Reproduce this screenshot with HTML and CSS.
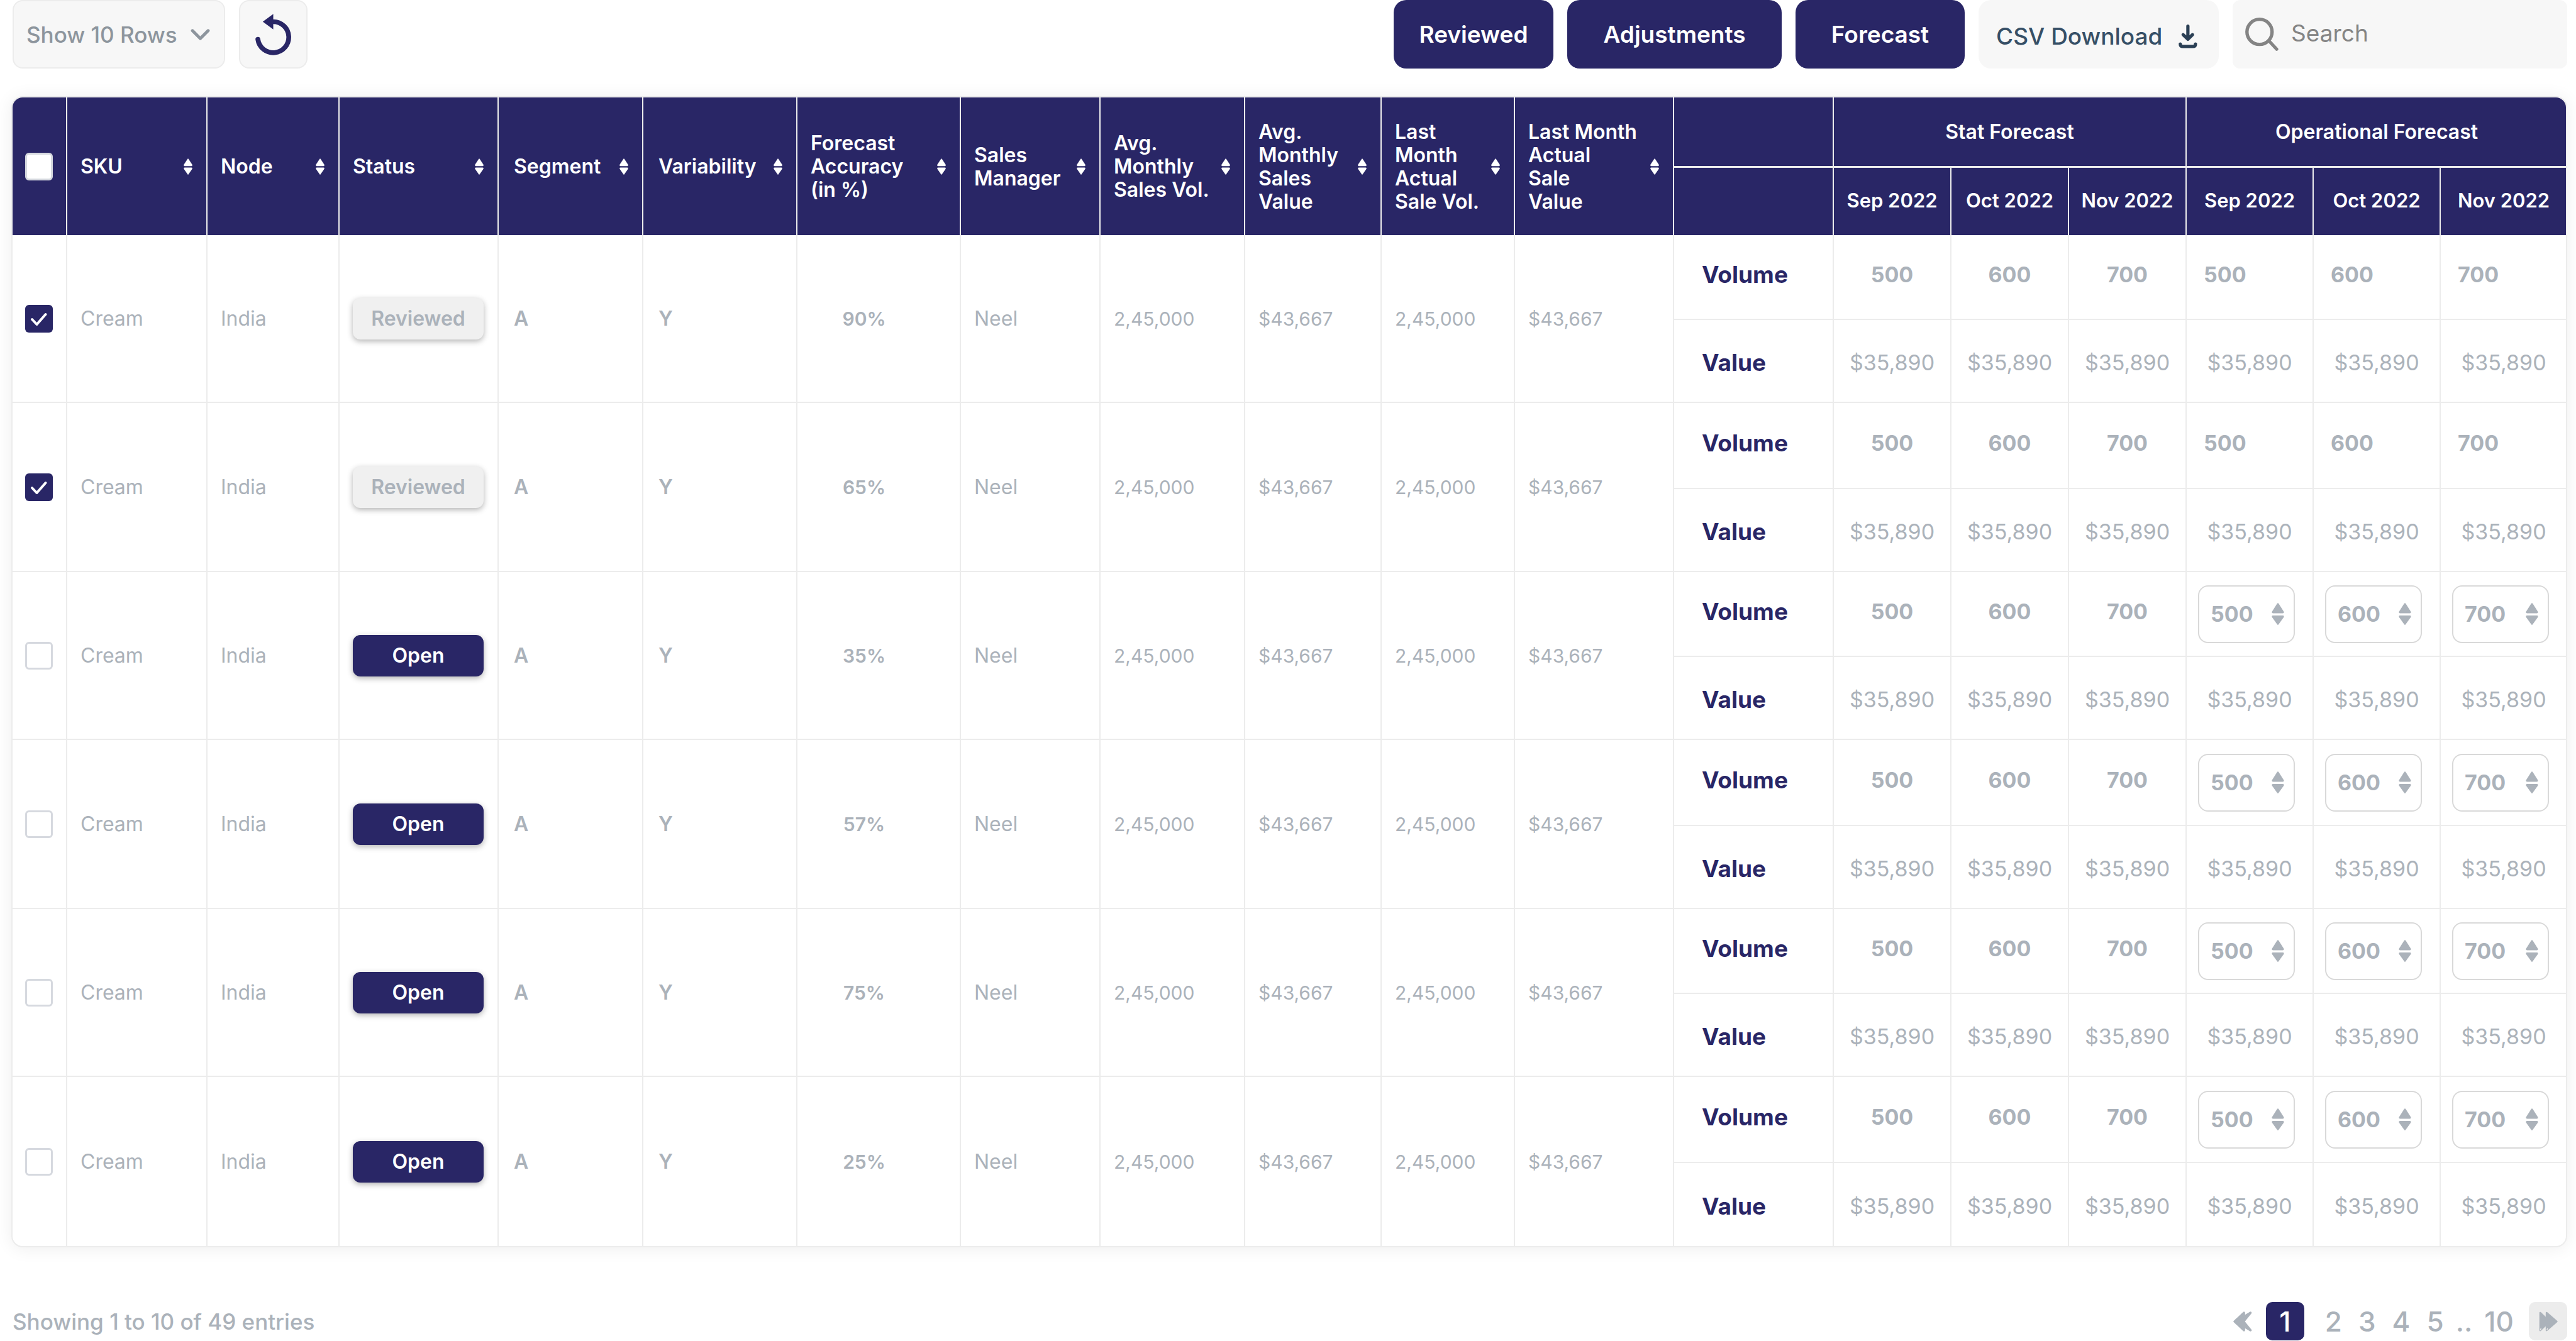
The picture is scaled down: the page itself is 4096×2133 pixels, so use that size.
FILE: index.html
```html
<!DOCTYPE html>
<html lang="en">
<head>
<meta charset="utf-8">
<meta name="viewport" content="width=device-width, initial-scale=1">
<title>Forecast Review</title>
<link rel="stylesheet" href="styles.css">
</head>
<body>
<svg class="symbols" aria-hidden="true">
  <symbol id="sort" viewBox="0 0 20 37"><path d="M9 1Q10-.6 11 1L19.4 14Q20.4 17.3 17.5 17.3H2.500Q-.4 17.3.6 14ZM9 36Q10 37.600 11 36L19.400 24Q20.400 20.800 17.500 20.800H2.500Q-.4 20.800.6 24Z" fill="currentColor"/></symbol>
  <symbol id="step" viewBox="0 0 28 50"><path d="M12.500 1.200Q14-.8 15.500 1.200L27.500 20Q28.500 23.500 25 23.500H3Q-.5 23.500.5 20ZM12.500 48.800Q14 50.800 15.500 48.800L27.500 32Q28.500 28.500 25 28.500H3Q-.5 28.500.5 32Z" fill="currentColor"/></symbol>
</svg>

<main class="page">
  <header class="toolbar">
    <label class="rows-select">
      <select aria-label="Rows to show"><option>Show 10 Rows</option><option>Show 25 Rows</option></select>
      <svg class="icon-chevron" viewBox="0 0 44 26" aria-hidden="true"><path d="M4 4 22 22 40 4" fill="none" stroke="currentColor" stroke-width="7" stroke-linecap="round" stroke-linejoin="round"/></svg>
    </label>
    <button class="reset" type="button" aria-label="Reset">
      <svg viewBox="480 93 246 282" aria-hidden="true"><path d="M598 145.500H603A106.500 106.500 0 1 1 497.500 267" fill="none" stroke="currentColor" stroke-width="33" stroke-linecap="round"/><path d="M531 146 603 93V198Z" fill="currentColor"/></svg>
    </button>
    <nav class="actions">
      <button class="btn" type="button">Reviewed</button>
      <button class="btn btn-wide" type="button">Adjustments</button>
      <button class="btn btn-mid" type="button">Forecast</button>
      <button class="btn-csv" type="button">CSV Download
        <svg viewBox="153 138 126 162" aria-hidden="true"><g fill="none" stroke="currentColor" stroke-width="22" stroke-linecap="round" stroke-linejoin="round"><path d="M215.500 149V236M183 207 215.500 238 247 207"/><path d="M164 270Q164 287 181 287H250Q267 287 267 270"/></g></svg>
      </button>
      <label class="search">
        <svg viewBox="612 90 227 228" aria-hidden="true"><circle cx="709.500" cy="187.500" r="86" fill="none" stroke="currentColor" stroke-width="23"/><path d="M773 248 827 306" stroke="currentColor" stroke-width="22" stroke-linecap="round"/></svg>
        <input type="text" placeholder="Search" aria-label="Search">
      </label>
    </nav>
  </header>

  <section class="card">
    <table class="grid">
      <colgroup>
        <col class="w-check"><col class="w-sku"><col class="w-node"><col class="w-status"><col class="w-segment"><col class="w-variability"><col class="w-accuracy"><col class="w-manager"><col class="w-avgvol"><col class="w-avgval"><col class="w-lastvol"><col class="w-lastval"><col class="w-measure"><col class="w-stat"><col class="w-stat"><col class="w-stat"><col class="w-oper"><col class="w-oper"><col class="w-last">
      </colgroup>
      <thead>
        <tr class="head-top">
          <th rowspan="2" class="check"><input type="checkbox" aria-label="Select all"></th>
          <th rowspan="2"><div class="head">SKU<button type="button" aria-label="Sort by SKU"><svg><use href="#sort"/></svg></button></div></th>
          <th rowspan="2"><div class="head">Node<button type="button" aria-label="Sort by node"><svg><use href="#sort"/></svg></button></div></th>
          <th rowspan="2"><div class="head">Status<button type="button" aria-label="Sort by status"><svg><use href="#sort"/></svg></button></div></th>
          <th rowspan="2" class="inset"><div class="head">Segment<button type="button" aria-label="Sort by segment"><svg><use href="#sort"/></svg></button></div></th>
          <th rowspan="2" class="inset"><div class="head">Variability<button type="button" aria-label="Sort by variability"><svg><use href="#sort"/></svg></button></div></th>
          <th rowspan="2"><div class="head"><span>Forecast<br>Accuracy<br>(in %)</span><button type="button" aria-label="Sort by forecast accuracy"><svg><use href="#sort"/></svg></button></div></th>
          <th rowspan="2"><div class="head"><span>Sales<br>Manager</span><button type="button" aria-label="Sort by sales manager"><svg><use href="#sort"/></svg></button></div></th>
          <th rowspan="2"><div class="head"><span>Avg.<br>Monthly<br>Sales Vol.</span><button type="button" aria-label="Sort by average volume"><svg><use href="#sort"/></svg></button></div></th>
          <th rowspan="2"><div class="head"><span>Avg.<br>Monthly<br>Sales<br>Value</span><button type="button" aria-label="Sort by average value"><svg><use href="#sort"/></svg></button></div></th>
          <th rowspan="2"><div class="head"><span>Last<br>Month<br>Actual<br>Sale Vol.</span><button type="button" aria-label="Sort by last month volume"><svg><use href="#sort"/></svg></button></div></th>
          <th rowspan="2"><div class="head"><span>Last Month<br>Actual<br>Sale<br>Value</span><button type="button" aria-label="Sort by last month value"><svg><use href="#sort"/></svg></button></div></th>
          <td class="split"></td>
          <th colspan="3" class="split">Stat Forecast</th>
          <th colspan="3" class="split end">Operational Forecast</th>
        </tr>
        <tr class="head-months">
          <td></td>
          <th>Sep 2022</th><th>Oct 2022</th><th>Nov 2022</th>
          <th>Sep 2022</th><th>Oct 2022</th><th class="end">Nov 2022</th>
        </tr>
      </thead>

      <tbody>
        <tr class="volume">
          <td rowspan="2" class="check"><input type="checkbox" checked aria-label="Select row 1"></td>
          <td rowspan="2" class="word">Cream</td><td rowspan="2" class="word">India</td>
          <td rowspan="2"><button type="button" class="status reviewed">Reviewed</button></td>
          <td rowspan="2" class="inset strong">A</td><td rowspan="2" class="inset strong">Y</td>
          <td rowspan="2" class="accuracy">90%</td><td rowspan="2" class="word">Neel</td>
          <td rowspan="2">2,45,000</td><td rowspan="2">$43,667</td><td rowspan="2">2,45,000</td><td rowspan="2">$43,667</td>
          <th scope="row">Volume</th><td class="num">500</td><td class="num">600</td><td class="num">700</td>
          <td class="fixed">500</td><td class="fixed">600</td><td class="fixed end">700</td>
        </tr>
        <tr class="value"><th scope="row">Value</th><td>$35,890</td><td>$35,890</td><td>$35,890</td><td>$35,890</td><td>$35,890</td><td class="end">$35,890</td></tr>
      </tbody>

      <tbody>
        <tr class="volume">
          <td rowspan="2" class="check"><input type="checkbox" checked aria-label="Select row 2"></td>
          <td rowspan="2" class="word">Cream</td><td rowspan="2" class="word">India</td>
          <td rowspan="2"><button type="button" class="status reviewed">Reviewed</button></td>
          <td rowspan="2" class="inset strong">A</td><td rowspan="2" class="inset strong">Y</td>
          <td rowspan="2" class="accuracy">65%</td><td rowspan="2" class="word">Neel</td>
          <td rowspan="2">2,45,000</td><td rowspan="2">$43,667</td><td rowspan="2">2,45,000</td><td rowspan="2">$43,667</td>
          <th scope="row">Volume</th><td class="num">500</td><td class="num">600</td><td class="num">700</td>
          <td class="fixed">500</td><td class="fixed">600</td><td class="fixed end">700</td>
        </tr>
        <tr class="value"><th scope="row">Value</th><td>$35,890</td><td>$35,890</td><td>$35,890</td><td>$35,890</td><td>$35,890</td><td class="end">$35,890</td></tr>
      </tbody>

      <tbody>
        <tr class="volume">
          <td rowspan="2" class="check"><input type="checkbox" aria-label="Select row 3"></td>
          <td rowspan="2" class="word">Cream</td><td rowspan="2" class="word">India</td>
          <td rowspan="2"><button type="button" class="status">Open</button></td>
          <td rowspan="2" class="inset strong">A</td><td rowspan="2" class="inset strong">Y</td>
          <td rowspan="2" class="accuracy">35%</td><td rowspan="2" class="word">Neel</td>
          <td rowspan="2">2,45,000</td><td rowspan="2">$43,667</td><td rowspan="2">2,45,000</td><td rowspan="2">$43,667</td>
          <th scope="row">Volume</th><td class="num">500</td><td class="num">600</td><td class="num">700</td>
          <td class="edit"><label class="stepper"><input type="number" value="500" aria-label="September volume"><svg><use href="#step"/></svg></label></td>
          <td class="edit"><label class="stepper"><input type="number" value="600" aria-label="October volume"><svg><use href="#step"/></svg></label></td>
          <td class="edit end"><label class="stepper"><input type="number" value="700" aria-label="November volume"><svg><use href="#step"/></svg></label></td>
        </tr>
        <tr class="value"><th scope="row">Value</th><td>$35,890</td><td>$35,890</td><td>$35,890</td><td>$35,890</td><td>$35,890</td><td class="end">$35,890</td></tr>
      </tbody>

      <tbody>
        <tr class="volume">
          <td rowspan="2" class="check"><input type="checkbox" aria-label="Select row 4"></td>
          <td rowspan="2" class="word">Cream</td><td rowspan="2" class="word">India</td>
          <td rowspan="2"><button type="button" class="status">Open</button></td>
          <td rowspan="2" class="inset strong">A</td><td rowspan="2" class="inset strong">Y</td>
          <td rowspan="2" class="accuracy">57%</td><td rowspan="2" class="word">Neel</td>
          <td rowspan="2">2,45,000</td><td rowspan="2">$43,667</td><td rowspan="2">2,45,000</td><td rowspan="2">$43,667</td>
          <th scope="row">Volume</th><td class="num">500</td><td class="num">600</td><td class="num">700</td>
          <td class="edit"><label class="stepper"><input type="number" value="500" aria-label="September volume"><svg><use href="#step"/></svg></label></td>
          <td class="edit"><label class="stepper"><input type="number" value="600" aria-label="October volume"><svg><use href="#step"/></svg></label></td>
          <td class="edit end"><label class="stepper"><input type="number" value="700" aria-label="November volume"><svg><use href="#step"/></svg></label></td>
        </tr>
        <tr class="value"><th scope="row">Value</th><td>$35,890</td><td>$35,890</td><td>$35,890</td><td>$35,890</td><td>$35,890</td><td class="end">$35,890</td></tr>
      </tbody>

      <tbody>
        <tr class="volume">
          <td rowspan="2" class="check"><input type="checkbox" aria-label="Select row 5"></td>
          <td rowspan="2" class="word">Cream</td><td rowspan="2" class="word">India</td>
          <td rowspan="2"><button type="button" class="status">Open</button></td>
          <td rowspan="2" class="inset strong">A</td><td rowspan="2" class="inset strong">Y</td>
          <td rowspan="2" class="accuracy">75%</td><td rowspan="2" class="word">Neel</td>
          <td rowspan="2">2,45,000</td><td rowspan="2">$43,667</td><td rowspan="2">2,45,000</td><td rowspan="2">$43,667</td>
          <th scope="row">Volume</th><td class="num">500</td><td class="num">600</td><td class="num">700</td>
          <td class="edit"><label class="stepper"><input type="number" value="500" aria-label="September volume"><svg><use href="#step"/></svg></label></td>
          <td class="edit"><label class="stepper"><input type="number" value="600" aria-label="October volume"><svg><use href="#step"/></svg></label></td>
          <td class="edit end"><label class="stepper"><input type="number" value="700" aria-label="November volume"><svg><use href="#step"/></svg></label></td>
        </tr>
        <tr class="value"><th scope="row">Value</th><td>$35,890</td><td>$35,890</td><td>$35,890</td><td>$35,890</td><td>$35,890</td><td class="end">$35,890</td></tr>
      </tbody>

      <tbody>
        <tr class="volume">
          <td rowspan="2" class="check"><input type="checkbox" aria-label="Select row 6"></td>
          <td rowspan="2" class="word">Cream</td><td rowspan="2" class="word">India</td>
          <td rowspan="2"><button type="button" class="status">Open</button></td>
          <td rowspan="2" class="inset strong">A</td><td rowspan="2" class="inset strong">Y</td>
          <td rowspan="2" class="accuracy">25%</td><td rowspan="2" class="word">Neel</td>
          <td rowspan="2">2,45,000</td><td rowspan="2">$43,667</td><td rowspan="2">2,45,000</td><td rowspan="2">$43,667</td>
          <th scope="row">Volume</th><td class="num">500</td><td class="num">600</td><td class="num">700</td>
          <td class="edit"><label class="stepper"><input type="number" value="500" aria-label="September volume"><svg><use href="#step"/></svg></label></td>
          <td class="edit"><label class="stepper"><input type="number" value="600" aria-label="October volume"><svg><use href="#step"/></svg></label></td>
          <td class="edit end"><label class="stepper"><input type="number" value="700" aria-label="November volume"><svg><use href="#step"/></svg></label></td>
        </tr>
        <tr class="value"><th scope="row">Value</th><td>$35,890</td><td>$35,890</td><td>$35,890</td><td>$35,890</td><td>$35,890</td><td class="end">$35,890</td></tr>
      </tbody>
    </table>
  </section>

  <footer class="footer">
    <p>Showing 1 to 10 of 49 entries</p>
    <nav class="pages" aria-label="Pages">
      <a href="#prev" class="prev" aria-label="Previous"><svg viewBox="0 0 42 46"><path d="M2.500 23 24 3V12L39 3 23 23 39 43 24 34V43Z" fill="currentColor" stroke="currentColor" stroke-width="5" stroke-linejoin="round"/></svg></a>
      <a href="#1" class="box current" aria-current="page">1</a>
      <a href="#2" class="page-no">2</a>
      <a href="#3" class="page-no">3</a>
      <a href="#4" class="page-no">4</a>
      <a href="#5" class="page-no">5</a>
      <span class="dots">..</span>
      <a href="#10" class="page-no">10</a>
      <a href="#next" class="box next" aria-label="Next"><svg viewBox="0 0 42 46"><path d="M2.500 3 17 17V3L40 23 17 43V29L2.500 43Z" fill="currentColor" stroke="currentColor" stroke-width="4" stroke-linejoin="round"/><path d="M3 42 4 39M18 42 19 39" stroke="#ececec" stroke-width="2" stroke-linecap="round"/></svg></a>
    </nav>
  </footer>
</main>
</body>
</html>
```
FILE: styles.css
```css
* {
  box-sizing: border-box;
}

:root {
  --navy: #292666;
  --grey: #abb2ba;
  --line: #ececec;
}

body {
  margin: 0;
  background: #fff;
  color: var(--grey);
  font-family: "Inter", "Liberation Sans", sans-serif;
  font-size: 30px;
}

button,
input,
select {
  font-family: inherit;
  margin: 0;
  border: 0;
}

button {
  cursor: pointer;
}

svg {
  display: block;
  flex: none;
}

.symbols {
  display: none;
}

.page {
  padding: 0 14px 0 18px;
}

/* Toolbar */

.toolbar {
  display: flex;
  gap: 22px;
  height: 109px;
  margin-bottom: 44px;
  padding-left: 2px;
}

.rows-select {
  display: flex;
  align-items: center;
  width: 338px;
  padding: 0 22px 0 20px;
  border: 2px solid var(--line);
  border-radius: 16px;
  background: #f7f7f7;
  color: #8d959d;
}

.rows-select select {
  flex: 1;
  min-width: 0;
  padding: 0;
  appearance: none;
  background: none;
  color: inherit;
  font-size: 35px;
  font-weight: 500;
}

.icon-chevron {
  width: 31px;
  height: 18px;
}

.reset {
  display: flex;
  align-items: center;
  justify-content: center;
  width: 109px;
  padding: 0;
  border: 2px solid var(--line);
  border-radius: 16px;
  background: #f7f7f7;
  color: var(--navy);
}

.reset svg {
  width: 57px;
  height: 66px;
}

.actions {
  display: flex;
  gap: 22px;
  margin-left: auto;
}

.btn {
  width: 254px;
  padding: 0;
  border-radius: 20px;
  background: var(--navy);
  color: #fff;
  font-size: 37px;
  font-weight: 600;
}

.btn-wide {
  width: 341px;
}

.btn-mid {
  width: 269px;
}

.btn-csv {
  display: flex;
  align-items: center;
  justify-content: space-between;
  width: 382px;
  padding: 6px 34px 0 28px;
  border-radius: 20px;
  background: #f7f7f7;
  color: #364f66;
  font-size: 37px;
  font-weight: 500;
}

.btn-csv svg {
  width: 30px;
  height: 38px;
  color: #2a3f54;
}

.search {
  display: flex;
  align-items: center;
  gap: 20px;
  width: 532px;
  padding: 0 20px;
  border-radius: 12px;
  background: #f7f7f7;
  color: #848484;
}

.search svg {
  width: 53px;
  height: 53px;
}

.search input {
  flex: 1;
  min-width: 0;
  padding: 0 0 4px;
  background: none;
  color: inherit;
  font-size: 37px;
}

.search input::placeholder {
  color: inherit;
  opacity: 1;
}

/* Table */

.card {
  overflow: hidden;
  border: 2px solid var(--line);
  border-radius: 18px;
  background: #fff;
  box-shadow: 0 2px 28px rgba(0, 0, 0, 0.07);
}

.grid {
  width: 100%;
  table-layout: fixed;
  border-spacing: 0;
  border-collapse: separate;
}

.w-check { width: 87px; }
.w-sku { width: 223px; }
.w-node { width: 210px; }
.w-status { width: 253px; }
.w-segment { width: 230px; }
.w-variability { width: 245px; }
.w-accuracy { width: 260px; }
.w-manager { width: 222px; }
.w-avgvol { width: 230px; }
.w-avgval { width: 217px; }
.w-lastvol { width: 212px; }
.w-lastval { width: 253px; }
.w-measure { width: 254px; }
.w-stat { width: 187px; }
.w-oper { width: 202px; }
.w-last { width: 200px; }

.grid th,
.grid td {
  padding: 0 0 0 21px;
  border-right: 2px solid var(--line);
  text-align: left;
  vertical-align: middle;
}

.grid .end {
  border-right: 0;
}

.grid thead th,
.grid thead td {
  background: var(--navy);
  color: #fff;
  font-size: 32px;
  font-weight: 600;
  line-height: 37px;
}

.grid thead .split {
  padding: 0;
  border-bottom: 3px solid var(--line);
  text-align: center;
}

.head-top {
  height: 112px;
}

.head-months {
  height: 107px;
}

.grid .head-months th {
  padding: 0 0 4px;
  font-size: 31px;
  text-align: center;
}

.head {
  display: flex;
  align-items: center;
  justify-content: space-between;
  padding-right: 22px;
}

.head button {
  padding: 0;
  background: none;
  color: #fff;
}

.head svg {
  width: 14px;
  height: 26px;
}

.grid .check {
  padding: 0 0 0 20px;
}

.grid th.inset,
.grid td.inset {
  padding-left: 24px;
}

.check input {
  display: block;
  width: 44px;
  height: 44px;
  appearance: none;
  border: 3px solid #d6d9df;
  border-radius: 6px;
  background: #fff;
}

.check input:checked {
  border: 0;
  background: var(--navy) url("data:image/svg+xml,%3Csvg xmlns='http://www.w3.org/2000/svg' viewBox='0 0 44 44'%3E%3Cpath d='M11 23 18.500 31 32.500 15' fill='none' stroke='white' stroke-width='4' stroke-linecap='round' stroke-linejoin='round'/%3E%3C/svg%3E") center / 44px 44px no-repeat;
}

.grid tbody td,
.grid tbody th {
  border-bottom: 2px solid var(--line);
}

.grid tbody:last-child td[rowspan],
.grid tbody:last-child .value > * {
  border-bottom: 0;
}

.volume {
  height: 135px;
}

.value {
  height: 132px;
}

tbody:nth-of-type(even) .volume {
  height: 137px;
}

.grid .word {
  font-size: 32px;
}

.grid .strong {
  font-size: 32px;
  font-weight: 600;
}

.grid .accuracy {
  padding: 0 46px 0 0;
  font-weight: 600;
  text-align: center;
}

.grid tbody th {
  padding: 0 0 8px 44px;
  color: var(--navy);
  font-size: 37px;
  font-weight: 700;
}

.grid .num,
.grid .fixed {
  padding: 0 0 8px;
  font-size: 34px;
  font-weight: 700;
  text-align: center;
}

.grid .fixed {
  padding-left: 27px;
  text-align: left;
}

.grid .value th {
  padding: 4px 0 0 44px;
}

.grid .value td {
  padding: 4px 0 0;
  font-size: 34px;
  text-align: center;
}

.grid .edit {
  padding: 0 0 0 18px;
}

.stepper {
  display: flex;
  align-items: center;
  width: 154px;
  height: 92px;
  padding: 0 15px 0 18px;
  border: 2px solid #d9d9d9;
  border-radius: 16px;
}

.stepper input {
  flex: 1;
  min-width: 0;
  padding: 0;
  appearance: textfield;
  background: none;
  color: inherit;
  font-size: 34px;
  font-weight: 700;
}

.stepper input::-webkit-inner-spin-button {
  display: none;
}

.stepper svg {
  width: 20px;
  height: 35px;
}

.status {
  display: block;
  width: 208px;
  height: 66px;
  padding: 0;
  border-radius: 12px;
  background: var(--navy);
  color: #fff;
  font-size: 32px;
  font-weight: 600;
  box-shadow: 0 3px 10px rgba(0, 0, 0, 0.3);
}

.status.reviewed {
  background: #f0f0f0;
  color: var(--grey);
}

/* Footer */

.footer {
  display: flex;
  align-items: center;
  justify-content: space-between;
  margin-top: 87px;
  padding-left: 2px;
}

.footer p {
  margin: 0;
  font-size: 35px;
  font-weight: 500;
}

.pages {
  display: flex;
  align-items: center;
  font-size: 44px;
  font-weight: 500;
}

.pages a {
  color: inherit;
  text-decoration: none;
}

.pages .box {
  display: flex;
  align-items: center;
  justify-content: center;
  width: 61px;
  height: 61px;
  border-radius: 10px;
}

.pages .current {
  margin: 0 20px 0 22px;
  background: var(--navy);
  color: #fff;
}

.pages .page-no {
  padding: 0 13px;
}

.pages .dots {
  padding: 0 6px;
}

.pages .next {
  margin-left: 11px;
  background: var(--line);
}

.pages svg {
  width: 30px;
  height: 32px;
}
```
